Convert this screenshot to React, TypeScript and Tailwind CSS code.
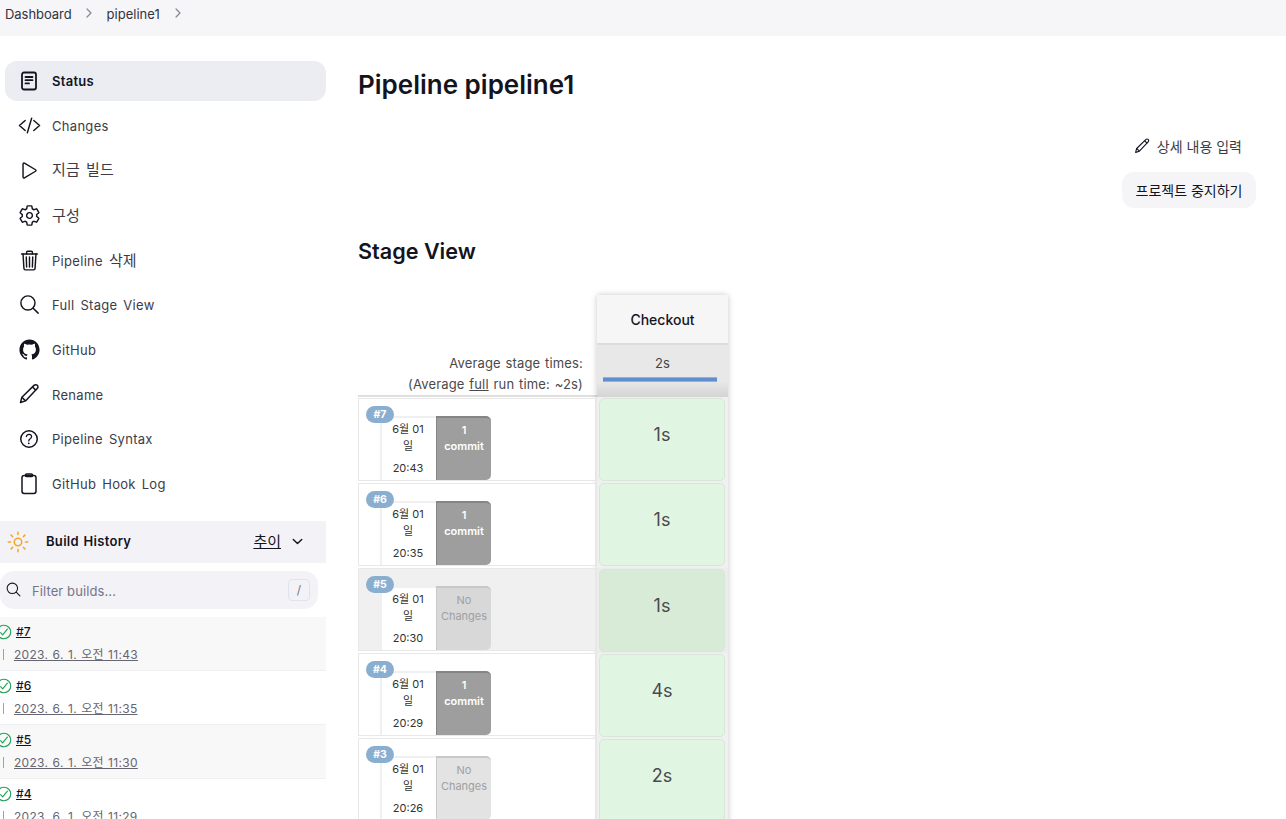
import React from "react";
import {
  IoChevronForward, IoChevronDown, IoCodeSlashOutline, IoPlayOutline, IoSettingsOutline, IoTrashOutline,
  IoSearchOutline, IoLogoGithub, IoHelpCircleOutline, IoSunnyOutline, IoCheckmarkCircleOutline,
} from "react-icons/io5";

const StatusIcon = () => (
  <svg width="24" height="24" viewBox="0 0 24 24" fill="none" stroke="#14141f" strokeWidth="1.8" strokeLinecap="round">
    <rect x="5" y="3.5" width="14" height="17" rx="2" />
    <path d="M8.5 8h7M8.5 11.2h7M8.5 14.4h3.5" />
  </svg>
);
const Pencil = ({ size = 24 }: { size?: number }) => (
  <svg width={size} height={size} viewBox="0 0 24 24" fill="none" stroke="#14141f" strokeWidth="1.5" strokeLinejoin="round">
    <path d="M3.5 20.5l1.4-5.2L17 3.4c1-1 2.5-1 3.3-.1.9.9.8 2.3-.1 3.2L8.5 18.9l-5 1.6z" />
    <path d="M4.9 15.3l3.6 3.6M15.5 5l3.5 3.4" />
  </svg>
);
const ClipboardIcon = () => (
  <svg width="24" height="24" viewBox="0 0 24 24" fill="none" stroke="#14141f" strokeWidth="1.5">
    <rect x="5" y="3.5" width="14" height="18" rx="2.2" />
    <rect x="8.5" y="2" width="7" height="2.6" rx="1.2" />
  </svg>
);

const Ko = ({ children }: { children: React.ReactNode }) => (
  <span className="text-[15px] tracking-[0.1px]">{children}</span>
);

const nav = [
  { key: "status", label: "Status", icon: <StatusIcon />, active: true },
  { key: "changes", label: "Changes", icon: <IoCodeSlashOutline size={23} color="#14141f" /> },
  { key: "build", label: <Ko>지금 빌드</Ko>, icon: <IoPlayOutline size={23} color="#14141f" /> },
  { key: "config", label: <Ko>구성</Ko>, icon: <IoSettingsOutline size={23} color="#14141f" /> },
  { key: "delete", label: <>Pipeline <Ko>삭제</Ko></>, icon: <IoTrashOutline size={23} color="#14141f" /> },
  { key: "full", label: "Full Stage View", icon: <IoSearchOutline size={23} color="#14141f" /> },
  { key: "github", label: "GitHub", icon: <IoLogoGithub size={23} color="#14141f" /> },
  { key: "rename", label: "Rename", icon: <Pencil /> },
  { key: "syntax", label: "Pipeline Syntax", icon: <IoHelpCircleOutline size={24} color="#14141f" /> },
  { key: "hook", label: "GitHub Hook Log", icon: <ClipboardIcon /> },
];

const history = [
  { n: "#7", d: "2023. 6. 1. 오전 11:43", alt: true },
  { n: "#6", d: "2023. 6. 1. 오전 11:35" },
  { n: "#5", d: "2023. 6. 1. 오전 11:30", alt: true },
  { n: "#4", d: "2023. 6. 1. 오전 11:29" },
];

const runs = [
  { n: "#7", t: "20:43", commit: true, s: "1s" },
  { n: "#6", t: "20:35", commit: true, s: "1s" },
  { n: "#5", t: "20:30", commit: false, s: "1s", hover: true },
  { n: "#4", t: "20:29", commit: true, s: "4s" },
  { n: "#3", t: "20:26", commit: false, s: "2s" },
];

export default function App() {
  return (
    <div className="w-[1286px] h-[819px] overflow-hidden bg-white text-[#14141f] font-['Inter','Noto_Sans_CJK_KR',sans-serif] antialiased">
      <div className="h-9 bg-[#f6f6f8] flex items-start pt-[5px] pl-[5px] text-[13px] leading-[18px] text-[#333340]">
        <span className="tracking-[-0.05px]">Dashboard</span>
        <IoChevronForward className="ml-[10px] mt-px" size={14} color="#8a8a95" />
        <span className="ml-[11px]">pipeline1</span>
        <IoChevronForward className="ml-[11px] mt-px" size={14} color="#8a8a95" />
      </div>

      <div className="flex">
        <aside className="w-[326px] shrink-0 pt-[25px]">
          <nav className="flex flex-col gap-[4.75px] pl-[5px]">
            {nav.map((i) => (
              <div key={i.key} className={`h-10 flex items-center rounded-xl pl-[12px] text-[13px] tracking-[0.3px] [word-spacing:2px] ${i.active ? "bg-[#ecedf2] font-semibold text-[#14141f]" : "text-[#3c3c48]"}`}>
                <span className="w-6 h-6 flex items-center justify-center shrink-0">{i.icon}</span>
                <span className={`ml-[11px] ${i.key === "build" ? "" : "pt-[2px]"}`}>{i.label}</span>
              </div>
            ))}
          </nav>

          <div className="mt-[17px] h-[42px] bg-[#f2f2f7] flex items-center pl-[6px] pr-[21px]">
            <IoSunnyOutline size={24} color="#f5a623" />
            <span className="ml-[16px] text-[13px] font-semibold tracking-[0.3px] [word-spacing:1px]">Build History</span>
            <span className="ml-auto text-[15px] underline">추이</span>
            <IoChevronDown className="ml-[9px]" size={15} />
          </div>

          <div className="mt-[8px] h-[38px] w-[318px] bg-[#f2f2f7] rounded-[14px] flex items-center pl-[5px] pr-[8px]">
            <IoSearchOutline size={17} color="#14141f" />
            <span className="ml-[10px] pt-[4px] text-[13px] tracking-[0.1px] text-[#75758a]">Filter builds...</span>
            <span className="ml-auto w-[22px] h-[22px] border border-[#e2e2ea] rounded-[4px] flex items-center justify-center text-[12px] text-[#75758a]">/</span>
          </div>

          <div className="mt-[8px]">
            {history.map((h) => (
              <div key={h.n} className={`h-[54px] border-b border-[#f0f0f3] pt-[5px] ${h.alt ? "bg-[#f8f8f8]" : "bg-white"}`}>
                <div className="flex items-center h-[20px] -ml-[5px]">
                  <IoCheckmarkCircleOutline size={18} color="#22a05a" />
                  <span className="ml-[3px] text-[12px] font-medium underline">{h.n}</span>
                </div>
                <div className="flex items-center h-[20px] mt-[3px] pl-[3px]">
                  <span className="w-px h-[11px] bg-[#a0a0a8]" />
                  <span className="ml-[10px] text-[12px] tracking-[0.3px] [word-spacing:0.6px] underline text-[#666672]">{h.d}</span>
                </div>
              </div>
            ))}
          </div>
        </aside>

        <main className="flex-1 min-w-0 pl-[32px] pr-[30px]">
          <h1 className="mt-[30px] text-[26px] leading-[38px] font-semibold">Pipeline pipeline1</h1>

          <div className="flex flex-col items-end mt-[32px]">
            <div className="flex items-center mr-[14px] h-5 text-[14px] text-[#3c3c48]">
              <Pencil size={18} />
              <span className="ml-[6px]">상세 내용 입력</span>
            </div>
            <button className="mt-[16px] w-[134px] h-9 rounded-xl bg-[#f5f5f8] text-[14px] text-[#14141f]">프로젝트 중지하기</button>
          </div>

          <h2 className="mt-[28px] text-[21.6px] leading-[30px] font-semibold">Stage View</h2>

          <div className="mt-[29px] flex">
            <div className="w-[239px] shrink-0">
              <div className="h-[102px] flex flex-col justify-end items-end pr-[14px] text-[13px] leading-[21px] tracking-[0.15px] [word-spacing:1px] text-[#4a4a4a] border-b-2 border-[#e0e0e0]">
                <span>Average stage times:</span>
                <span>(Average <span className="underline">full</span> run time: ~2s)</span>
              </div>
              {runs.map((r) => (
                <div key={r.n} className="h-[85px] py-px pr-px">
                  <div className={`relative h-full border border-[#e8e8e8] pt-[17px] pl-[21px] flex overflow-hidden ${r.hover ? "bg-[#f0f0f0]" : "bg-white"}`}>
                    <span className="absolute left-[7px] top-[7px] w-[28px] h-[17px] rounded-full bg-[#8aaed0] text-white text-[10.5px] font-bold flex items-center justify-center">{r.n}</span>
                    <div className="w-[56px] bg-white border-l-2 border-t-2 border-[#f0f0f3] flex flex-col items-center text-[11px] text-[#333] leading-[16px] pt-[3px] pr-[2px]">
                      <span className="mb-px">6월 01</span>
                      <span>일</span>
                      <span className="mt-[6px]">{r.t}</span>
                    </div>
                    <div className={`w-[55px] rounded-r-[5px] border-l border-t-2 flex flex-col items-center text-[11px] leading-[16px] pt-[4px] ${r.commit ? "bg-[#9e9e9e] border-[#858585] text-white font-semibold" : `${r.hover ? "bg-[#d8d8d8]" : "bg-[#e3e3e3]"} border-[#c8c8c8] text-[#a0a0a0]`}`}>
                      {r.commit ? <><span>1</span><span>commit</span></> : <><span>No</span><span>Changes</span></>}
                    </div>
                  </div>
                </div>
              ))}
            </div>

            <div className="w-[131px] shrink-0 bg-[#f0f0f0] shadow-[0_0_6px_rgba(0,0,0,0.22)]">
              <div className="h-[50px] bg-[#f6f6f6] flex items-center justify-center text-[14px] font-medium border-b-2 border-[#dcdcdc]">Checkout</div>
              <div className="h-[52px] bg-gradient-to-b from-[#e8e8e8] from-70% to-[#d4d4d4] flex flex-col pt-[9px] text-[13px] leading-[18px] text-[#444]">
                <span className="text-center">2s</span>
                <div className="mt-[5px] ml-[6px] w-[114px] h-[5px] bg-[#5f8fcf] border-y border-[#8fb2dc]" />
              </div>
              {runs.map((r) => (
                <div key={r.n} className={`h-[85.33px] pl-[2px] pr-[3px] pt-[1px] ${r.hover ? "bg-[#ececec]" : ""}`}>
                  <div className={`h-[83px] rounded-[5px] border border-[#d8e6d8] text-center pt-[22px] text-[18px] leading-[28px] text-[#4a4a50] ${r.hover ? "bg-[#d7ebd7]" : "bg-[#e1f6e2]"}`}>{r.s}</div>
                </div>
              ))}
            </div>
          </div>
        </main>
      </div>
    </div>
  );
}
